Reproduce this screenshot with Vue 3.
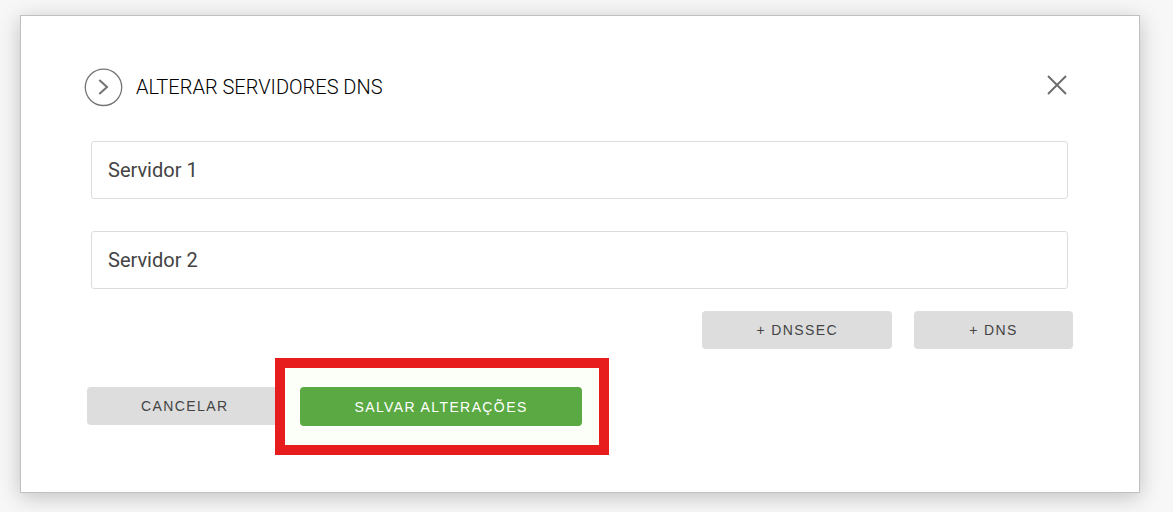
<script setup>
import { ref } from 'vue'

const servers = ref([
  { id: 'server-1', label: 'Servidor 1', value: 'Servidor 1' },
  { id: 'server-2', label: 'Servidor 2', value: 'Servidor 2' },
])
</script>

<template>
  <main class="page">
    <section class="dialog" role="dialog" aria-labelledby="dialog-title">
      <header class="head">
        <svg class="badge" viewBox="0 0 38 38" aria-hidden="true">
          <circle cx="18.5" cy="19.3" r="18.2" />
          <path d="M14.3 12 L22 19 L14.3 26" />
        </svg>
        <h1 id="dialog-title">ALTERAR SERVIDORES DNS</h1>
        <button class="close" type="button" aria-label="Fechar">
          <svg viewBox="0 0 20 20" aria-hidden="true">
            <path d="M1 1 L19 19 M19 1 L1 19" />
          </svg>
        </button>
      </header>

      <form class="form" @submit.prevent>
        <div class="fields">
          <input
            v-for="server in servers"
            :id="server.id"
            :key="server.id"
            v-model="server.value"
            type="text"
            :aria-label="server.label"
          />
        </div>
        <div class="extras">
          <button class="btn" type="button">+ DNSSEC</button>
          <button class="btn" type="button">+ DNS</button>
        </div>
        <div class="actions">
          <button class="btn" type="button">CANCELAR</button>
          <div class="highlight">
            <button class="btn save" type="submit">SALVAR ALTERAÇÕES</button>
          </div>
        </div>
      </form>
    </section>
  </main>
</template>

<style>
body {
  background: #f7f7f7;
}
</style>

<style scoped>
.page {
  padding: 15px 33px 19px 20px;
}

.dialog {
  padding: 52px 66px 66px 64px;
  border: 1px solid #c0c0c0;
  background: #fff;
  box-shadow: 0 4px 20px rgba(0, 0, 0, 0.22);
  font-family: Roboto, sans-serif;
}

.head {
  display: flex;
  align-items: center;
  padding-right: 6px;
}

.badge {
  width: 38px;
  height: 38px;
  overflow: visible;
  fill: none;
  stroke: #757575;
  stroke-width: 1.3;
}

.badge path {
  stroke-width: 2.1;
}

h1 {
  flex: 1;
  margin: 0 0 0 13px;
  font-size: 20px;
  font-weight: 300;
  line-height: 24px;
  color: #000;
}

.close {
  display: flex;
  padding: 0 0 4px;
  border: 0;
  background: none;
}

.close svg {
  width: 20px;
  height: 20px;
  fill: none;
  stroke: #6b6b6b;
  stroke-width: 1.9;
}

.fields {
  display: flex;
  flex-direction: column;
  gap: 32px;
  margin: 35px 5px 22px 6px;
}

input {
  box-sizing: border-box;
  width: 100%;
  height: 58px;
  padding: 0 16px;
  border: 1px solid #dcdcdc;
  border-radius: 3px;
  background: #fff;
  font: 400 20px Roboto, sans-serif;
  color: #444;
}

.extras {
  display: flex;
  justify-content: flex-end;
  gap: 22px;
}

.btn {
  min-width: 159px;
  height: 38px;
  padding: 0 54px;
  border: 0;
  border-radius: 4px;
  background: #ddd;
  font: 14px "Liberation Sans", Arial, sans-serif;
  letter-spacing: 0.1em;
  color: #444;
}

.actions {
  display: flex;
  gap: 18px;
  margin: 38px 0 0 2px;
}

.highlight {
  position: relative;
  isolation: isolate;
}

.highlight::before {
  content: "";
  position: absolute;
  inset: -29px -27px -29px -25px;
  z-index: -1;
  border: 10px solid #e71c1c;
  background: #fbfff8;
}

.save {
  display: block;
  height: 39px;
  background: #5aa943;
  color: #fff;
}
</style>
